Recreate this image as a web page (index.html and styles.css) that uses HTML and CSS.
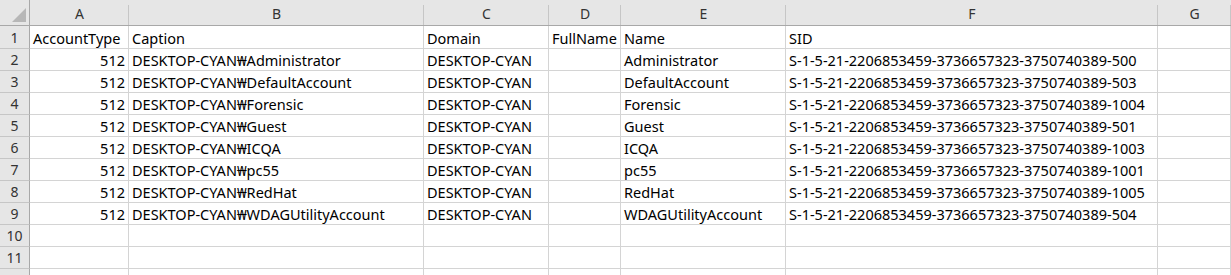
FILE: index.html
```html
<!DOCTYPE html>
<html>
<head>
<meta charset="utf-8">
<link rel="stylesheet" href="styles.css">
</head>
<body>
<div class="sheet">
  <div class="corner"><span class="tri"></span></div>
  <div class="colhead">A</div>
  <div class="colhead">B</div>
  <div class="colhead">C</div>
  <div class="colhead">D</div>
  <div class="colhead">E</div>
  <div class="colhead">F</div>
  <div class="colhead">G</div>

  <div class="rowhead first">1</div>
  <div class="cell first">AccountType</div>
  <div class="cell first">Caption</div>
  <div class="cell first">Domain</div>
  <div class="cell first">FullName</div>
  <div class="cell first">Name</div>
  <div class="cell first">SID</div>
  <div class="cell first"></div>

  <div class="rowhead">2</div>
  <div class="cell num">512</div>
  <div class="cell">DESKTOP-CYAN₩Administrator</div>
  <div class="cell">DESKTOP-CYAN</div>
  <div class="cell"></div>
  <div class="cell">Administrator</div>
  <div class="cell">S-1-5-21-2206853459-3736657323-3750740389-500</div>
  <div class="cell"></div>

  <div class="rowhead">3</div>
  <div class="cell num">512</div>
  <div class="cell">DESKTOP-CYAN₩DefaultAccount</div>
  <div class="cell">DESKTOP-CYAN</div>
  <div class="cell"></div>
  <div class="cell">DefaultAccount</div>
  <div class="cell">S-1-5-21-2206853459-3736657323-3750740389-503</div>
  <div class="cell"></div>

  <div class="rowhead">4</div>
  <div class="cell num">512</div>
  <div class="cell">DESKTOP-CYAN₩Forensic</div>
  <div class="cell">DESKTOP-CYAN</div>
  <div class="cell"></div>
  <div class="cell">Forensic</div>
  <div class="cell">S-1-5-21-2206853459-3736657323-3750740389-1004</div>
  <div class="cell"></div>

  <div class="rowhead">5</div>
  <div class="cell num">512</div>
  <div class="cell">DESKTOP-CYAN₩Guest</div>
  <div class="cell">DESKTOP-CYAN</div>
  <div class="cell"></div>
  <div class="cell">Guest</div>
  <div class="cell">S-1-5-21-2206853459-3736657323-3750740389-501</div>
  <div class="cell"></div>

  <div class="rowhead">6</div>
  <div class="cell num">512</div>
  <div class="cell">DESKTOP-CYAN₩ICQA</div>
  <div class="cell">DESKTOP-CYAN</div>
  <div class="cell"></div>
  <div class="cell">ICQA</div>
  <div class="cell">S-1-5-21-2206853459-3736657323-3750740389-1003</div>
  <div class="cell"></div>

  <div class="rowhead">7</div>
  <div class="cell num">512</div>
  <div class="cell">DESKTOP-CYAN₩pc55</div>
  <div class="cell">DESKTOP-CYAN</div>
  <div class="cell"></div>
  <div class="cell">pc55</div>
  <div class="cell">S-1-5-21-2206853459-3736657323-3750740389-1001</div>
  <div class="cell"></div>

  <div class="rowhead">8</div>
  <div class="cell num">512</div>
  <div class="cell">DESKTOP-CYAN₩RedHat</div>
  <div class="cell">DESKTOP-CYAN</div>
  <div class="cell"></div>
  <div class="cell">RedHat</div>
  <div class="cell">S-1-5-21-2206853459-3736657323-3750740389-1005</div>
  <div class="cell"></div>

  <div class="rowhead">9</div>
  <div class="cell num">512</div>
  <div class="cell">DESKTOP-CYAN₩WDAGUtilityAccount</div>
  <div class="cell">DESKTOP-CYAN</div>
  <div class="cell"></div>
  <div class="cell">WDAGUtilityAccount</div>
  <div class="cell">S-1-5-21-2206853459-3736657323-3750740389-504</div>
  <div class="cell"></div>

  <div class="rowhead">10</div>
  <div class="cell"></div><div class="cell"></div><div class="cell"></div><div class="cell"></div><div class="cell"></div><div class="cell"></div><div class="cell"></div>

  <div class="rowhead">11</div>
  <div class="cell"></div><div class="cell"></div><div class="cell"></div><div class="cell"></div><div class="cell"></div><div class="cell"></div><div class="cell"></div>

  <div class="rowhead"></div>
  <div class="cell"></div><div class="cell"></div><div class="cell"></div><div class="cell"></div><div class="cell"></div><div class="cell"></div><div class="cell"></div>
</div>
</body>
</html>
```

FILE: styles.css
```css
html, body {
  margin: 0;
  padding: 0;
  background: #ffffff;
  overflow: hidden;
}

.sheet {
  display: grid;
  grid-template-columns: 30px 99px 295px 125px 72px 165px 372px 73px;
  grid-template-rows: 26px 23px repeat(10, 22px) 7px;
  width: 1231px;
  height: 275px;
  overflow: hidden;
  font-family: "Noto Sans", "Open Sans", "Noto Sans CJK KR", sans-serif;
  font-size: 14.5px;
  color: #000;
}

.corner {
  position: relative;
  background: #e6e6e6;
  border-right: 1px solid #a8a8a8;
  border-bottom: 1px solid #a8a8a8;
}

.tri {
  position: absolute;
  right: 3px;
  bottom: 3px;
  width: 0;
  height: 0;
  border-left: 14px solid transparent;
  border-bottom: 14px solid #b7b7b7;
}

.colhead {
  background: #e6e6e6;
  border-bottom: 1px solid #a8a8a8;
  display: flex;
  align-items: center;
  justify-content: center;
  color: #333;
  font-size: 14px;
  padding-top: 2px;
  position: relative;
}

.colhead::after {
  content: "";
  position: absolute;
  right: 0;
  top: 5px;
  bottom: 0;
  width: 1px;
  background: #c6c6c6;
}

.rowhead {
  background: #e6e6e6;
  border-right: 1px solid #a8a8a8;
  border-bottom: 1px solid #c6c6c6;
  display: flex;
  align-items: flex-end;
  justify-content: center;
  color: #333;
  font-size: 14px;
  line-height: 20px;
}

.cell {
  border-right: 1px solid #d4d4d4;
  border-bottom: 1px solid #d4d4d4;
  padding: 0 3px;
  white-space: nowrap;
  line-height: 20px;
  display: flex;
  align-items: flex-end;
}

.cell.num {
  justify-content: flex-end;
}
```
